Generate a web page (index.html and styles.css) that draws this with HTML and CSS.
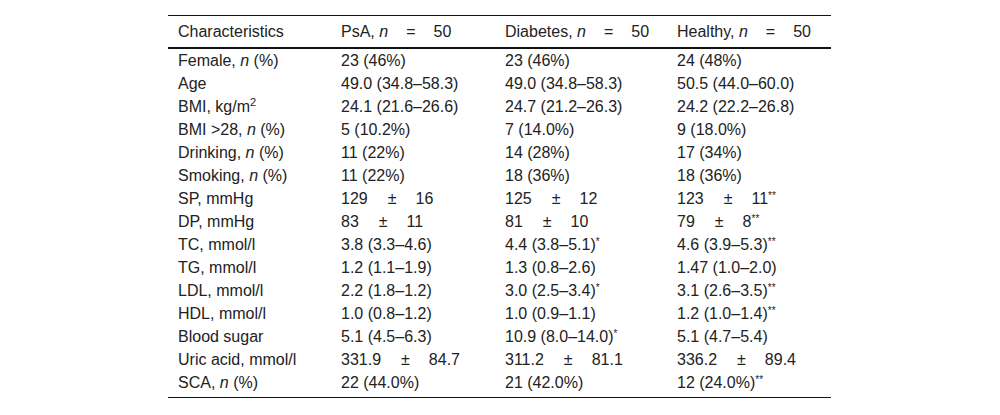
FILE: index.html
```html
<!DOCTYPE html>
<html>
<head>
<meta charset="utf-8">
<link rel="stylesheet" href="styles.css">
</head>
<body>
<div class="wrap">
<table class="tbl">
<colgroup><col class="c1"><col class="c2"><col class="c3"><col class="c4"></colgroup>
<thead>
<tr><th>Characteristics</th><th>PsA, <i>n</i><span class="eq">=</span>50</th><th>Diabetes, <i>n</i><span class="eq">=</span>50</th><th>Healthy, <i>n</i><span class="eq">=</span>50</th></tr>
</thead>
<tbody>
<tr><td>Female, <i>n</i> (%)</td><td>23 (46%)</td><td>23 (46%)</td><td>24 (48%)</td></tr>
<tr><td>Age</td><td>49.0 (34.8–58.3)</td><td>49.0 (34.8–58.3)</td><td>50.5 (44.0–60.0)</td></tr>
<tr><td>BMI, kg/m<sup>2</sup></td><td>24.1 (21.6–26.6)</td><td>24.7 (21.2–26.3)</td><td>24.2 (22.2–26.8)</td></tr>
<tr><td>BMI &gt;28, <i>n</i> (%)</td><td>5 (10.2%)</td><td>7 (14.0%)</td><td>9 (18.0%)</td></tr>
<tr><td>Drinking, <i>n</i> (%)</td><td>11 (22%)</td><td>14 (28%)</td><td>17 (34%)</td></tr>
<tr><td>Smoking, <i>n</i> (%)</td><td>11 (22%)</td><td>18 (36%)</td><td>18 (36%)</td></tr>
<tr><td>SP, mmHg</td><td>129<span class="pm">±</span>16</td><td>125<span class="pm">±</span>12</td><td>123<span class="pm">±</span>11<sup class="st">**</sup></td></tr>
<tr><td>DP, mmHg</td><td>83<span class="pm">±</span>11</td><td>81<span class="pm">±</span>10</td><td>79<span class="pm">±</span>8<sup class="st">**</sup></td></tr>
<tr><td>TC, mmol/l</td><td>3.8 (3.3–4.6)</td><td>4.4 (3.8–5.1)<sup class="st">*</sup></td><td>4.6 (3.9–5.3)<sup class="st">**</sup></td></tr>
<tr><td>TG, mmol/l</td><td>1.2 (1.1–1.9)</td><td>1.3 (0.8–2.6)</td><td>1.47 (1.0–2.0)</td></tr>
<tr><td>LDL, mmol/l</td><td>2.2 (1.8–1.2)</td><td>3.0 (2.5–3.4)<sup class="st">*</sup></td><td>3.1 (2.6–3.5)<sup class="st">**</sup></td></tr>
<tr><td>HDL, mmol/l</td><td>1.0 (0.8–1.2)</td><td>1.0 (0.9–1.1)</td><td>1.2 (1.0–1.4)<sup class="st">**</sup></td></tr>
<tr><td>Blood sugar</td><td>5.1 (4.5–6.3)</td><td>10.9 (8.0–14.0)<sup class="st">*</sup></td><td>5.1 (4.7–5.4)</td></tr>
<tr><td>Uric acid, mmol/l</td><td>331.9<span class="pm">±</span>84.7</td><td>311.2<span class="pm">±</span>81.1</td><td>336.2<span class="pm">±</span>89.4</td></tr>
<tr><td>SCA, <i>n</i> (%)</td><td>22 (44.0%)</td><td>21 (42.0%)</td><td>12 (24.0%)<sup class="st">**</sup></td></tr>
</tbody>
</table>
</div>
</body>
</html>
```
FILE: styles.css
```css
html, body {
  margin: 0;
  padding: 0;
  background: #fff;
}
body {
  font-family: "Liberation Sans", Arial, sans-serif;
  font-size: 16px;
  color: #222;
}
.wrap {
  padding-top: 15px;
  padding-left: 168px;
}
.tbl {
  border-collapse: collapse;
  width: 663px;
  border-top: 1px solid #111;
  border-bottom: 1px solid #111;
}
.c1 { width: 163px; }
.c2 { width: 164px; }
.c3 { width: 172px; }
.c4 { width: 164px; }
.tbl th {
  font-weight: normal;
  text-align: left;
  padding: 0 0 0 10px;
  height: 31px;
  border-bottom: 2px solid #111;
  white-space: nowrap;
}
.tbl td {
  padding: 0 0 0 10px;
  height: 23px;
  white-space: nowrap;
}
.tbl tbody tr:last-child td {
  padding-bottom: 3px;
}
.eq {
  margin: 0 18px;
}
.pm {
  margin: 0 19px 0 20px;
}
sup {
  font-size: 11px;
  line-height: 0;
  vertical-align: 6px;
}
sup.st {
  font-size: 10px;
  vertical-align: 5px;
}
```
